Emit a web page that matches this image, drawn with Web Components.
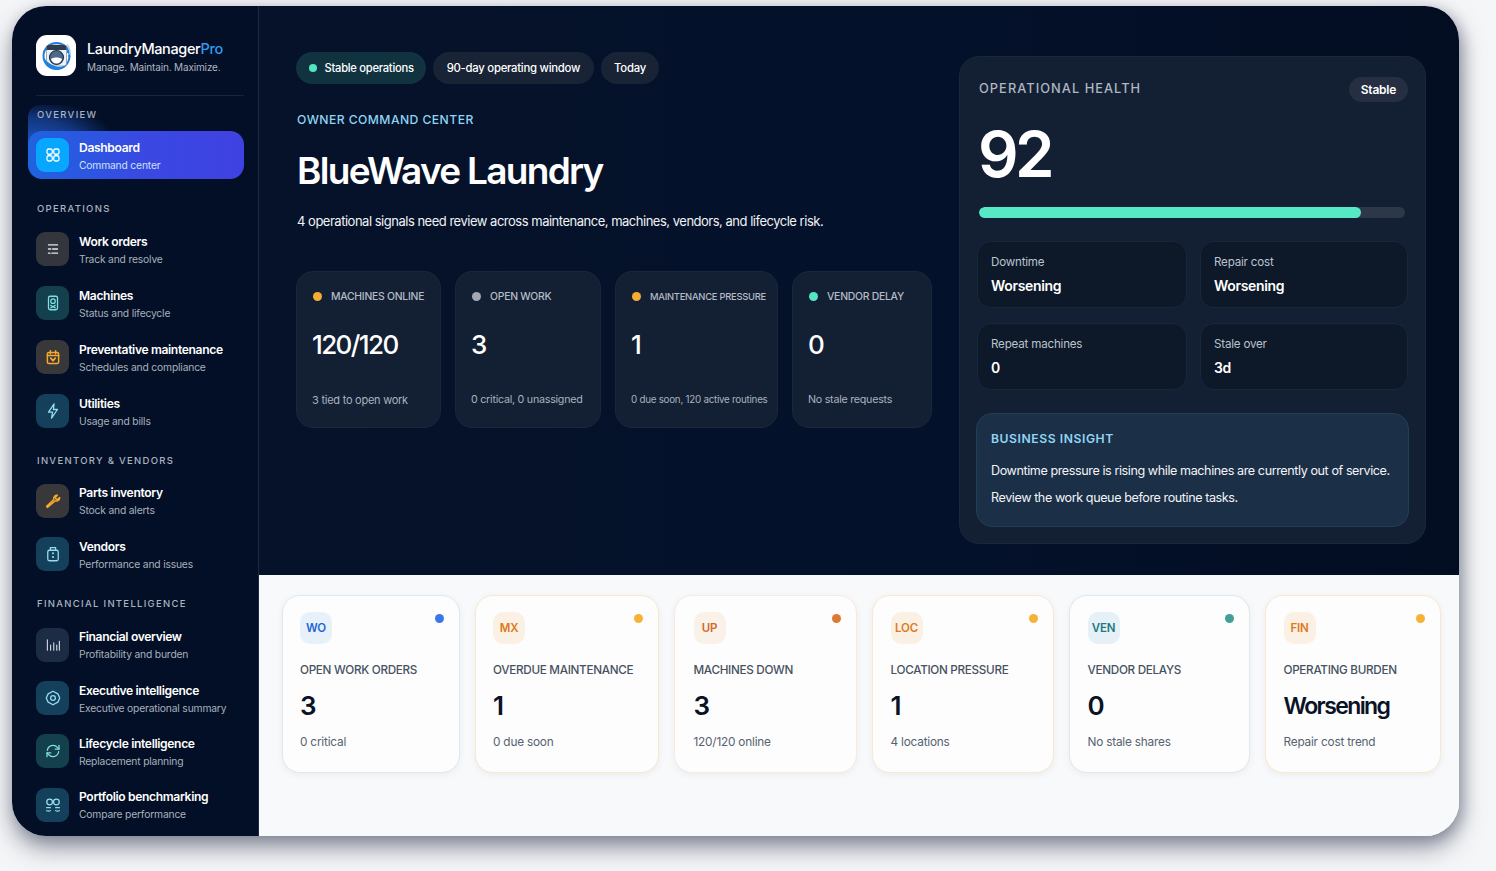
<!DOCTYPE html>
<html lang="en">
<head>
<meta charset="utf-8">
<title>LaundryManagerPro</title>
<style>
    html, body { margin: 0; height: 871px; overflow: hidden; background: #f5f6f8; font-family: Inter, "Liberation Sans", sans-serif; }
</style>
</head>
<body>
<app-shell>
    <side-nav slot="nav">
        <nav-section label="OVERVIEW" glow>
            <nav-item icon="dash" tone="active" active>Dashboard<span slot="sub">Command center</span></nav-item>
        </nav-section>
        <nav-section label="OPERATIONS" style="--mb:10px;--gap:6px">
            <nav-item icon="work" tone="gray">Work orders<span slot="sub">Track and resolve</span></nav-item>
            <nav-item icon="machine" tone="teal">Machines<span slot="sub">Status and lifecycle</span></nav-item>
            <nav-item icon="calendar" tone="amber">Preventative maintenance<span slot="sub">Schedules and compliance</span></nav-item>
            <nav-item icon="bolt" tone="blue">Utilities<span slot="sub">Usage and bills</span></nav-item>
        </nav-section>
        <nav-section label="INVENTORY &amp; VENDORS" style="--top:20px;--mb:9.500px">
            <nav-item icon="wrench" tone="amber">Parts inventory<span slot="sub">Stock and alerts</span></nav-item>
            <nav-item icon="vendor" tone="blue">Vendors<span slot="sub">Performance and issues</span></nav-item>
        </nav-section>
        <nav-section label="FINANCIAL INTELLIGENCE" style="--top:20px;--mb:10.500px;--gap:5.400px">
            <nav-item icon="bars" tone="slate">Financial overview<span slot="sub">Profitability and burden</span></nav-item>
            <nav-item icon="target" tone="blue">Executive intelligence<span slot="sub">Executive operational summary</span></nav-item>
            <nav-item icon="cycle" tone="teal">Lifecycle intelligence<span slot="sub">Replacement planning</span></nav-item>
            <nav-item icon="compare" tone="blue">Portfolio benchmarking<span slot="sub">Compare performance</span></nav-item>
        </nav-section>
    </side-nav>

    <hero-band slot="hero">
        <div slot="pills">
            <status-pill tone="live" dot>Stable operations</status-pill>
            <status-pill>90-day operating window</status-pill>
            <status-pill>Today</status-pill>
        </div>
        <stat-card slot="stats" color="#f5ae33" label="MACHINES ONLINE" value="120/120" note="3 tied to open work"></stat-card>
        <stat-card slot="stats" color="#a2a8b2" label="OPEN WORK" value="3" note="0 critical, 0 unassigned" style="--note:10.700px"></stat-card>
        <stat-card slot="stats" color="#f5ae33" label="MAINTENANCE PRESSURE" value="1" note="0 due soon, 120 active routines" style="--note:9.800px;--head:9.400px"></stat-card>
        <stat-card slot="stats" color="#54e6c3" label="VENDOR DELAY" value="0" note="No stale requests" style="--note:10.700px"></stat-card>
        <health-panel slot="panel" score="92" percent="89.7">
            <health-tile label="Downtime">Worsening</health-tile>
            <health-tile label="Repair cost">Worsening</health-tile>
            <health-tile label="Repeat machines">0</health-tile>
            <health-tile label="Stale over">3d</health-tile>
            <span slot="insight">Downtime pressure is rising while machines are currently out of service.<br>Review the work queue before routine tasks.</span>
        </health-panel>
    </hero-band>

    <kpi-row slot="kpis">
        <kpi-card code="WO" tone="blue" dot="#3b78e7" label="OPEN WORK ORDERS" value="3" note="0 critical" style="--pad:17px"></kpi-card>
        <kpi-card code="MX" tone="orange" dot="#f5b335" label="OVERDUE MAINTENANCE" value="1" note="0 due soon" style="--pad:17px"></kpi-card>
        <kpi-card code="UP" tone="red" dot="#dc7a35" label="MACHINES DOWN" value="3" note="120/120 online" style="--pad:18.500px"></kpi-card>
        <kpi-card code="LOC" tone="orange" dot="#f5b335" label="LOCATION PRESSURE" value="1" note="4 locations"></kpi-card>
        <kpi-card code="VEN" tone="teal" dot="#429f98" label="VENDOR DELAYS" value="0" note="No stale shares"></kpi-card>
        <kpi-card code="FIN" tone="orange" dot="#f5b335" label="OPERATING BURDEN" value="Worsening" note="Repair cost trend"></kpi-card>
    </kpi-row>
</app-shell>

<script>
const ICONS = {
    dash: '<rect x="4" y="4" width="7" height="7" rx="2.400"/><rect x="13" y="4" width="7" height="7" rx="2.400"/><rect x="4" y="13" width="7" height="7" rx="2.400"/><rect x="13" y="13" width="7" height="7" rx="2.400"/>',
    work: '<path d="M6 6.500h12M6 12h3M11.500 12H18M6 17.500h2M10.500 17.500H18"/>',
    machine: '<rect x="6" y="3" width="12" height="18" rx="2.200"/><circle cx="12" cy="9.500" r="3"/><path d="M9 15l3 2 3-2M9 18.500l3-1.500 3 1.500"/>',
    calendar: '<rect x="4.500" y="6" width="15" height="14.500" rx="2"/><path d="M8.500 3.500v4M15.500 3.500v4M4.500 10h15"/><path d="M9 13.500l3 3.500 3-3.500" stroke-width="2.400"/>',
    bolt: '<path d="M13.500 2.500 6 13.500H11.500L10 21.500l8-11.500H12.500z"/>',
    wrench: '<path d="M4.500 20.500 3.500 19l9.500-9c-.6-2.200.2-4 1.600-5 1-.7 2.100-.9 3.100-.7l-2.500 2.800.7 2.300 2.300.6 2.600-2.600c.2 1.200-.2 2.400-1.100 3.300-1.300 1.300-3 1.700-4.900 1.100z"/>',
    vendor: '<rect x="5" y="7" width="14" height="14" rx="2.200"/><path d="M8.500 7V3.500h7V7"/><path d="M12 11v.01M12 16v.01" stroke-width="2.800"/>',
    bars: '<path d="M4.500 5v14M8.800 12v7M13 9v10M17 12v7M20.500 7v12" stroke-width="1.500"/>',
    target: '<path d="M12 3l6.500 3.500L21 12l-2.500 5.500L12 21l-6.500-3.500L3 12l2.500-5.500z"/><circle cx="12" cy="12" r="3.200"/>',
    cycle: '<path d="M4.500 11a7.600 7.600 0 0 1 13.300-3.800L20 9.500"/><path d="M20 4.500v5h-5"/><path d="M19.500 13a7.600 7.600 0 0 1-13.300 3.800L4 14.500"/><path d="M4 19.500v-5h5"/>',
    compare: '<circle cx="7.500" cy="8" r="3.800"/><circle cx="16.500" cy="8" r="3.800"/><path d="M3.500 15.500h5M15.500 15.500h5M3.500 19.500c1 .8 4 .8 5 0M15.500 19.500c1 .8 4 .8 5 0"/>'
}

const TONES = {
    gray: ['#33363d', '#e4e8ec', 1.800],
    teal: ['#14404e', '#7fdfe2', 1.700],
    amber: ['#38383b', '#f7a92c', 2],
    blue: ['#15405c', '#93dcf2', 1.700],
    slate: ['#1b2c44', '#cfd8e2', 1.500],
    active: ['#07a6ff', '#ffffff', 1.700]
}

class AppShell extends HTMLElement {
    constructor() {
        super()
        this.attachShadow({ mode: 'open' })
        this.shadowRoot.innerHTML = `
            <style>
                :host {
                    display: block;
                    width: 1447px;
                    height: 830px;
                    margin: 6px 0 0 12px;
                    border-radius: 34px;
                    box-shadow: 0 12px 24px rgba(50, 58, 80, .5), 4px 3px 14px rgba(50, 58, 80, .28);
                }
                .frame {
                    display: grid;
                    grid-template-columns: 247px 1fr;
                    height: 100%;
                    border-radius: 34px;
                    overflow: hidden;
                    background: #f8f9fb;
                }
                .content { display: flex; flex-direction: column; min-width: 0; }
            </style>
            <div class="frame">
                <slot name="nav"></slot>
                <div class="content">
                    <slot name="hero"></slot>
                    <slot name="kpis"></slot>
                </div>
            </div>
        `
    }
}

class SideNav extends HTMLElement {
    constructor() {
        super()
        this.attachShadow({ mode: 'open' })
        this.shadowRoot.innerHTML = `
            <style>
                :host {
                    display: block;
                    box-sizing: border-box;
                    height: 830px;
                    padding: 29px 14px 0 16px;
                    overflow: hidden;
                    background: #030f26;
                    border-right: 1px solid #1b2a40;
                }
                .brand {
                    display: flex;
                    align-items: center;
                    gap: 11px;
                    margin-left: 8px;
                    padding-bottom: 19px;
                    border-bottom: 1px solid #18243a;
                }
                .logo { width: 40px; height: 41px; flex: none; }
                .text { padding-top: 2px; }
                .name { color: #fff; font-size: 14.500px; font-weight: 500; letter-spacing: -.38px; line-height: 20px; }
                .name b { color: #2f9bf2; font-weight: 500; }
                .tag { color: #aeb6c2; font-size: 10px; letter-spacing: -.15px; line-height: 14px; margin-top: 1px; }
            </style>
            <div class="brand">
                <svg class="logo" viewBox="0 0 40 41">
                    <rect width="40" height="41" rx="11" fill="#fff"/>
                    <circle cx="20.500" cy="21" r="13" fill="none" stroke="#1f7fd8" stroke-width="2"/>
                    <path d="M31 9.500a15 15 0 0 1 3 10" fill="none" stroke="#a6d0f0" stroke-width="1.500"/>
                    <rect x="10.500" y="10" width="20" height="21" rx="2.500" fill="#eef2f6" stroke="#7d8a9a" stroke-width=".7"/>
                    <path d="M10.500 12.500a2.500 2.500 0 0 1 2.500-2.500h15a2.500 2.500 0 0 1 2.500 2.500v2.500h-20z" fill="#2f3c4e"/>
                    <circle cx="20.500" cy="22.500" r="7" fill="#4c6a8e" stroke="#24364c" stroke-width="1.200"/>
                    <path d="M15 24c3-2 8-2 11 0-1 3-3 4.500-5.500 4.500S16 27 15 24z" fill="#fff"/>
                    <path d="M7 22c1 8 7 12.500 14 12.500 4 0 7-1.500 9-4-6 2.500-15 2-23-8.500z" fill="#1d83e0"/>
                    <circle cx="32" cy="17" r="1.200" fill="#1f7fd8"/><circle cx="33" cy="21" r="1" fill="#1f7fd8"/>
                </svg>
                <div class="text">
                    <div class="name">LaundryManager<b>Pro</b></div>
                    <div class="tag">Manage. Maintain. Maximize.</div>
                </div>
            </div>
            <slot></slot>
        `
    }
}

class NavSection extends HTMLElement {
    constructor() {
        super()
        this.attachShadow({ mode: 'open' })
        this.shadowRoot.innerHTML = `
            <style>
                :host { display: block; position: relative; margin-top: var(--top, 21px); }
                :host([glow]) { margin-top: 13px; margin-bottom: 24px; }
                :host([glow]) .glow {
                    position: absolute;
                    left: 0;
                    top: -4px;
                    width: 80px;
                    height: 44px;
                    border-radius: 12px 0 0 0;
                    background: radial-gradient(ellipse at 0% 100%, rgba(34, 92, 212, .95), rgba(34, 92, 212, .5) 50%, rgba(34, 92, 212, 0) 80%);
                }
                .label {
                    position: relative;
                    margin: 0 0 var(--mb, 10px) 9px;
                    color: #a9b3c1;
                    font-size: 9.500px;
                    font-weight: 500;
                    letter-spacing: 1.300px;
                    line-height: 12px;
                }
                .items { position: relative; display: flex; flex-direction: column; gap: var(--gap, 5.700px); }
            </style>
            <div class="glow"></div>
            <div class="label"></div>
            <div class="items"><slot></slot></div>
        `
        this.shadowRoot.querySelector('.label').textContent = this.getAttribute('label')
    }
}

class NavItem extends HTMLElement {
    constructor() {
        super()
        this.attachShadow({ mode: 'open' })
        const [bg, fg, weight] = TONES[this.getAttribute('tone')]
        this.shadowRoot.innerHTML = `
            <style>
                :host {
                    display: flex;
                    align-items: center;
                    gap: 10px;
                    box-sizing: border-box;
                    height: 48px;
                    padding: 0 8px;
                    border-radius: 14px;
                }
                :host([active]) { background: linear-gradient(90deg, #1f63df, #3a48e2 55%, #3f42e2); }
                .icon {
                    display: flex;
                    align-items: center;
                    justify-content: center;
                    flex: none;
                    width: 33px;
                    height: 34px;
                    border-radius: 9px;
                    background: ${bg};
                }
                svg { width: 18px; height: 18px; fill: none; stroke: ${fg}; stroke-width: ${weight}; stroke-linecap: round; stroke-linejoin: round; }
                .title { color: #fff; font-size: 12.100px; font-weight: 600; letter-spacing: -.35px; line-height: 18px; white-space: nowrap; }
                .sub { color: #a7b1bd; font-size: 10.300px; letter-spacing: -.18px; line-height: 14px; margin-top: 1px; white-space: nowrap; }
                :host([active]) .sub { color: #cfe0f7; }
            </style>
            <div class="icon"><svg viewBox="0 0 24 24">${ICONS[this.getAttribute('icon')]}</svg></div>
            <div>
                <div class="title"><slot></slot></div>
                <div class="sub"><slot name="sub"></slot></div>
            </div>
        `
    }
}

class HeroBand extends HTMLElement {
    constructor() {
        super()
        this.attachShadow({ mode: 'open' })
        this.shadowRoot.innerHTML = `
            <style>
                :host {
                    display: grid;
                    grid-template-columns: 636px 467px;
                    column-gap: 27px;
                    box-sizing: border-box;
                    height: 569px;
                    padding: 46px 33px 0 37px;
                    background: linear-gradient(90deg, #05122a, #04112a 60%, #030d22);
                    color: #fff;
                }
                .eyebrow { margin: 28px 0 0 1px; color: #8fd5f2; font-size: 12.200px; font-weight: 500; letter-spacing: .42px; line-height: 16px; }
                h1 { margin: 19px 0 0 1px; font-size: 37px; font-weight: 600; letter-spacing: -1.700px; line-height: 48px; }
                p { margin: 16px 0 0 1px; color: #f0f3f6; font-size: 13px; letter-spacing: -.49px; line-height: 20px; }
                .stats { display: grid; grid-template-columns: 145px 146px 163px 140px; column-gap: 14px; margin-top: 40px; }
                .panel { margin-top: 4px; }
                ::slotted([slot=pills]) { display: flex; gap: 7px; }
            </style>
            <div>
                <slot name="pills"></slot>
                <div class="eyebrow">OWNER COMMAND CENTER</div>
                <h1>BlueWave Laundry</h1>
                <p>4 operational signals need review across maintenance, machines, vendors, and lifecycle risk.</p>
                <div class="stats"><slot name="stats"></slot></div>
            </div>
            <div class="panel"><slot name="panel"></slot></div>
        `
    }
}

class StatusPill extends HTMLElement {
    constructor() {
        super()
        this.attachShadow({ mode: 'open' })
        this.shadowRoot.innerHTML = `
            <style>
                :host {
                    display: inline-flex;
                    align-items: center;
                    gap: 8px;
                    height: 32px;
                    padding: 0 13.500px;
                    border-radius: 16px;
                    background: #182335;
                    color: #fff;
                    font-size: 11.350px;
                    font-weight: 500;
                    letter-spacing: -.27px;
                }
                :host([dot]) { padding: 0 12.500px; font-size: 11.200px; }
                :host([tone=live]) { background: #11323f; }
                .dot { width: 8px; height: 8px; border-radius: 50%; background: #54e6c3; display: none; }
                :host([dot]) .dot { display: block; }
            </style>
            <span class="dot"></span><slot></slot>
        `
    }
}

class StatCard extends HTMLElement {
    constructor() {
        super()
        this.attachShadow({ mode: 'open' })
        this.shadowRoot.innerHTML = `
            <style>
                :host {
                    display: block;
                    box-sizing: border-box;
                    height: 157px;
                    padding: 16px 6px 0 15px;
                    border: 1px solid #1a2739;
                    border-radius: 17px;
                    background: #131f33;
                }
                .head { display: flex; align-items: center; gap: 9px; height: 16px; color: #b4bcc7; font-size: var(--head, 10.400px); font-weight: 500; letter-spacing: -.25px; white-space: nowrap; }
                .dot { flex: none; width: 9px; height: 9px; margin-left: 1px; border-radius: 50%; background: ${this.getAttribute('color')}; }
                .value { margin-top: 22.500px; color: #fff; font-size: 26px; font-weight: 500; letter-spacing: -1.600px; line-height: 36px; }
                .note { margin-top: 29px; color: #a9b2be; font-size: var(--note, 11px); letter-spacing: -.25px; line-height: 16px; white-space: nowrap; }
            </style>
            <div class="head"><span class="dot"></span><span>${this.getAttribute('label')}</span></div>
            <div class="value">${this.getAttribute('value')}</div>
            <div class="note">${this.getAttribute('note')}</div>
        `
    }
}

class HealthPanel extends HTMLElement {
    constructor() {
        super()
        this.attachShadow({ mode: 'open' })
        this.shadowRoot.innerHTML = `
            <style>
                :host {
                    display: block;
                    box-sizing: border-box;
                    height: 488px;
                    padding: 20px 17px 0;
                    border: 1px solid #1a2739;
                    border-radius: 20px;
                    background: #131f33;
                }
                .head { display: flex; justify-content: space-between; align-items: center; height: 25px; margin: 0 0 0 2px; }
                .title { margin-bottom: 2px; color: #aeb7c2; font-size: 12.800px; font-weight: 500; letter-spacing: 1.050px; }
                .badge {
                    display: flex; align-items: center; height: 25px; padding: 0 12px; border-radius: 13px;
                    background: #252f41; color: #fff; font-size: 12px; font-weight: 600; letter-spacing: -.25px;
                }
                .score { margin: 18px 0 0 1px; color: #fff; font-size: 63.500px; font-weight: 600; letter-spacing: -3.500px; line-height: 68px; }
                .track { height: 11px; margin: 19px 3px 0 2px; border-radius: 6px; background: #2c3747; overflow: hidden; }
                .fill { height: 100%; border-radius: 6px; background: #57e8c6; }
                .tiles { display: grid; grid-template-columns: 210px 208px; column-gap: 13px; row-gap: 15px; margin-top: 23px; }
                .insight {
                    box-sizing: border-box; height: 114px; margin: 23px -1px 0 -1px; padding: 17px 10px 0 14px;
                    border: 1px solid #213f57; border-radius: 16px; background: #1b2f47;
                }
                .insight h2 { margin: 0; color: #90d6f4; font-size: 12.200px; font-weight: 600; letter-spacing: .55px; line-height: 16px; }
                .body { margin-top: 10px; color: #f1f4f7; font-size: 12.600px; letter-spacing: -.42px; line-height: 27px; white-space: nowrap; }
            </style>
            <div class="head"><span class="title">OPERATIONAL HEALTH</span><span class="badge">Stable</span></div>
            <div class="score">${this.getAttribute('score')}</div>
            <div class="track"><div class="fill" style="width:${this.getAttribute('percent')}%"></div></div>
            <div class="tiles"><slot></slot></div>
            <div class="insight">
                <h2>BUSINESS INSIGHT</h2>
                <div class="body"><slot name="insight"></slot></div>
            </div>
        `
    }
}

class HealthTile extends HTMLElement {
    constructor() {
        super()
        this.attachShadow({ mode: 'open' })
        this.shadowRoot.innerHTML = `
            <style>
                :host {
                    display: block;
                    box-sizing: border-box;
                    height: 67px;
                    padding: 12px 13px 0;
                    border: 1px solid #18273a;
                    border-radius: 14px;
                    background: #0d1829;
                }
                .label { color: #bac2cc; font-size: 11.600px; letter-spacing: -.2px; line-height: 16px; }
                .value { margin-top: 6px; color: #fff; font-size: 14px; font-weight: 600; letter-spacing: -.32px; line-height: 20px; }
            </style>
            <div class="label">${this.getAttribute('label')}</div>
            <div class="value"><slot></slot></div>
        `
    }
}

class KpiRow extends HTMLElement {
    constructor() {
        super()
        this.attachShadow({ mode: 'open' })
        this.shadowRoot.innerHTML = `
            <style>
                :host {
                    display: grid;
                    grid-template-columns: 178px 184px 183px 182px 181px 176px;
                    column-gap: 15px;
                    align-content: start;
                    flex: 1;
                    padding: 20px 18px 0 23px;
                    background: #f8f9fb;
                }
            </style>
            <slot></slot>
        `
    }
}

const KPI_TONES = {
    blue: ['#e6f1f9', '#1f66d8', '#dce9f2'],
    orange: ['#fbf0e4', '#dd7a1c', '#fbe8cc'],
    red: ['#faf1e8', '#d2682a', '#faeadb'],
    teal: ['#e6f1f7', '#1f7a80', '#dde9f0']
}

class KpiCard extends HTMLElement {
    constructor() {
        super()
        this.attachShadow({ mode: 'open' })
        const [bg, fg, line] = KPI_TONES[this.getAttribute('tone')]
        const wide = this.getAttribute('value').length > 3
        this.shadowRoot.innerHTML = `
            <style>
                :host {
                    display: block;
                    box-sizing: border-box;
                    height: 178px;
                    padding: 16px 15px 0 var(--pad, 17.500px);
                    border: 1.500px solid ${line};
                    border-radius: 18px;
                    background: #fdfdfe;
                    box-shadow: 0 2px 6px rgba(70, 85, 110, .08);
                }
                .top { display: flex; justify-content: space-between; align-items: flex-start; }
                .badge {
                    display: flex; align-items: center; justify-content: center;
                    width: 32px; height: 32px; border-radius: 10px;
                    background: ${bg}; color: ${fg}; font-size: 11.500px; font-weight: 600; letter-spacing: -.2px;
                }
                .dot { width: 9px; height: 9px; margin-top: 2px; border-radius: 50%; background: ${this.getAttribute('dot')}; }
                .label { margin-top: 18px; color: #465260; font-size: 11.700px; font-weight: 500; letter-spacing: -.3px; line-height: 16px; white-space: nowrap; }
                .value { margin-top: 10px; height: 36px; color: #0a1226; font-size: ${wide ? 23 : 26}px; font-weight: 600; letter-spacing: ${wide ? -1.600 : -.5}px; line-height: 36px; }
                .note { margin-top: 9px; color: #56626f; font-size: 11.800px; letter-spacing: -.2px; line-height: 18px; }
            </style>
            <div class="top"><div class="badge">${this.getAttribute('code')}</div><span class="dot"></span></div>
            <div class="label">${this.getAttribute('label')}</div>
            <div class="value">${this.getAttribute('value')}</div>
            <div class="note">${this.getAttribute('note')}</div>
        `
    }
}

customElements.define('app-shell', AppShell)
customElements.define('side-nav', SideNav)
customElements.define('nav-section', NavSection)
customElements.define('nav-item', NavItem)
customElements.define('hero-band', HeroBand)
customElements.define('status-pill', StatusPill)
customElements.define('stat-card', StatCard)
customElements.define('health-panel', HealthPanel)
customElements.define('health-tile', HealthTile)
customElements.define('kpi-row', KpiRow)
customElements.define('kpi-card', KpiCard)
</script>
</body>
</html>
